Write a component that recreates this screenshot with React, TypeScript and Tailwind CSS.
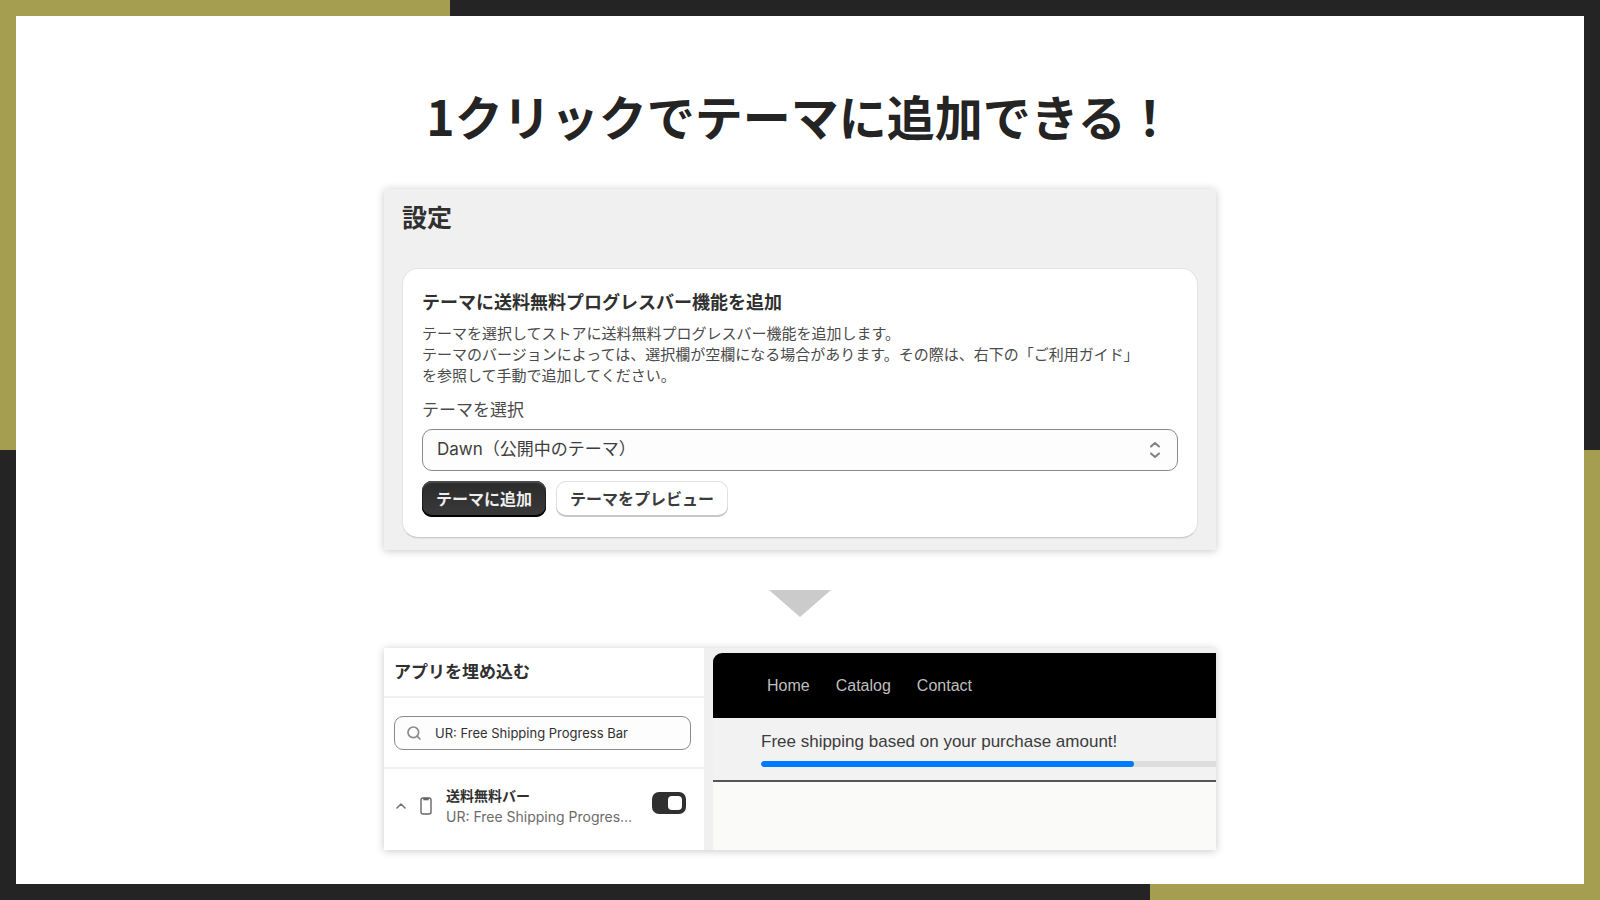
import { useState } from 'react';
import { Search } from 'lucide-react';

const NAV_LINKS = ['Home', 'Catalog', 'Contact'];
const PROGRESS = 82;

function ThemeSettings() {
  const [theme, setTheme] = useState('dawn');

  return (
    <section className="w-full bg-[#f0f0f0] px-[18px] pt-[11px] pb-3 shadow-[0_1px_8px_rgba(0,0,0,0.22)]">
      <h2 className="text-[25px] leading-8 font-bold text-[#303030]">設定</h2>

      <div className="mt-9 rounded-2xl border border-[#e3e3e3] border-b-[#cccccc] bg-white px-[19px] py-5 shadow-[0_1px_1px_rgba(0,0,0,0.06)]">
        <h3 className="text-lg leading-6 font-bold text-[#303030]">テーマに送料無料プログレスバー機能を追加</h3>
        <p className="mt-[9px] text-[15px] leading-[21px] text-[#4a4a4a]">
          テーマを選択してストアに送料無料プログレスバー機能を追加します。
          <br />
          テーマのバージョンによっては、選択欄が空欄になる場合があります。その際は、右下の「ご利用ガイド」
          <br />
          を参照して手動で追加してください。
        </p>

        <label htmlFor="theme" className="mt-3 block text-[17px] leading-6 text-[#4a4a4a]">
          テーマを選択
        </label>
        <div className="relative mt-2">
          <select
            id="theme"
            value={theme}
            onChange={(e) => setTheme(e.target.value)}
            className="block h-[42px] w-full appearance-none rounded-[10px] border border-[#8a8a8a] bg-[#fdfdfd] px-[14px] font-['Inter','Noto_Sans_CJK_JP',sans-serif] text-[17px] text-[#3c3c3c]"
          >
            <option value="dawn">Dawn（公開中のテーマ）</option>
          </select>
          <svg
            viewBox="0 0 12 18"
            className="pointer-events-none absolute top-3 right-[17px] h-[18px] w-3"
            fill="none"
            stroke="#808080"
            strokeWidth="2"
            strokeLinecap="round"
            strokeLinejoin="round"
          >
            <path d="M2 5.5 L6 2 L10 5.5" />
            <path d="M2 12.5 L6 16 L10 12.5" />
          </svg>
        </div>

        <div className="mt-[10px] flex flex-wrap gap-[10px]">
          <button
            type="button"
            className="h-9 rounded-[10px] bg-linear-to-b from-[#2b2b2b] to-[#3a3a3a] px-[14px] pb-[2px] text-base leading-6 font-bold text-[#eeeeee] shadow-[inset_0_2px_0_#4a4a4a,inset_0_-2px_0_#000,inset_0_0_0_1px_#1c1c1c]"
          >
            テーマに追加
          </button>
          <button
            type="button"
            className="h-9 rounded-[10px] bg-white px-[14px] pb-[2px] text-base leading-6 font-bold text-[#3c3c3c] shadow-[inset_0_-2px_0_#c8c8c8,inset_0_0_0_1px_#e0e0e0]"
          >
            テーマをプレビュー
          </button>
        </div>
      </div>
    </section>
  );
}

function EmbedPanel() {
  const [query, setQuery] = useState('UR: Free Shipping Progress Bar');
  const [enabled, setEnabled] = useState(true);

  return (
    <div className="flex w-[320px] shrink-0 flex-col bg-white">
      <h2 className="border-b-2 border-[#f0f0f0] px-[10px] pt-[11px] pb-[13px] text-[17px] leading-6 font-bold text-[#303030]">
        アプリを埋め込む
      </h2>

      <div className="border-b-2 border-[#f0f0f0] pt-[18px] pr-[13px] pb-[17px] pl-[10px]">
        <label className="flex h-[34px] items-center gap-[13px] rounded-[9px] border border-[#8a8a8a] bg-[#fdfdfd] px-[11px]">
          <Search size={16} strokeWidth={2.5} className="shrink-0 text-[#8a8a8a]" />
          <input
            type="text"
            aria-label="Search"
            value={query}
            onChange={(e) => setQuery(e.target.value)}
            className="w-full min-w-0 bg-transparent font-['Inter',sans-serif] text-[13px] leading-5 text-[#303030] outline-none"
          />
        </label>
      </div>

      <div className="flex items-center pt-[15px] pr-[18px] pl-3">
        <svg viewBox="0 0 10 6" className="h-[6px] w-[10px] shrink-0" fill="none" stroke="#707070" strokeWidth="1.5" strokeLinecap="round" strokeLinejoin="round">
          <path d="M1 5 L5 1 L9 5" />
        </svg>
        <svg viewBox="0 0 12 18" className="ml-[14px] h-[18px] w-3 shrink-0" fill="none" stroke="#666666" strokeWidth="1.4">
          <rect x="1" y="1" width="10" height="16" rx="2" />
          <path d="M4 1.6h4v1H4z" fill="#555555" />
        </svg>
        <div className="ml-[14px] min-w-0 flex-1">
          <p className="text-sm leading-[22px] font-bold text-[#303030]">送料無料バー</p>
          <p className="font-['Inter',sans-serif] text-sm leading-[22px] whitespace-nowrap text-[#6b6b6b]">UR: Free Shipping Progres…</p>
        </div>
        <input
          type="checkbox"
          aria-label="送料無料バー"
          checked={enabled}
          onChange={(e) => setEnabled(e.target.checked)}
          className="mt-2 flex h-[22px] w-[34px] shrink-0 appearance-none items-center self-start rounded-[7px] bg-[#8a8a8a] px-1 before:size-[14px] before:rounded-[4px] before:bg-white checked:justify-end checked:bg-[#303030]"
        />
      </div>
    </div>
  );
}

function StorePreview() {
  return (
    <div className="min-w-0 flex-1 bg-[#f0f0f0] pt-[5px] pl-[9px] font-['Liberation_Sans',Arial,sans-serif]">
      <div className="flex h-full flex-col overflow-hidden rounded-tl-[9px] bg-[#fafaf9]">
        <nav className="flex h-[65px] items-center gap-[26px] bg-black pl-[54px]">
          {NAV_LINKS.map((link) => (
            <a key={link} href="#" className="text-base leading-6 text-[#bfbfbf]">
              {link}
            </a>
          ))}
        </nav>
        <div className="border-b-2 border-[#55555a] bg-[#f2f2f2] pt-3 pb-[13px] pl-12">
          <p className="text-[17px] leading-6 text-[#3c3c3c]">Free shipping based on your purchase amount!</p>
          <div
            role="progressbar"
            aria-label="Free shipping"
            aria-valuenow={PROGRESS}
            className="mt-[7px] h-[6px] overflow-hidden rounded-l-full bg-[#dddddd]"
          >
            <div className="h-full rounded-full bg-[#007aff]" style={{ width: `${PROGRESS}%` }} />
          </div>
        </div>
      </div>
    </div>
  );
}

export default function App() {
  return (
    <div
      lang="ja"
      className="flex min-h-screen p-4 font-['Noto_Sans_CJK_JP',sans-serif] [background:linear-gradient(#a59e50,#a59e50)_left_top/450px_50%_no-repeat,linear-gradient(#a59e50,#a59e50)_right_bottom/450px_50%_no-repeat,#242424]"
    >
      <main className="flex flex-1 flex-col items-center bg-white px-6 pt-[71px] pb-[34px]">
        <h1 className="text-5xl leading-[56px] font-bold text-[#242424]">1クリックでテーマに追加できる！</h1>

        <div className="mt-[46px] flex w-full max-w-[832px] flex-col items-center">
          <ThemeSettings />

          <svg viewBox="0 0 62 27" className="mt-10 h-[27px] w-[62px]" fill="#cbcbcb">
            <path d="M0 0H62L31 27Z" />
          </svg>

          <section className="mt-[31px] flex min-h-[202px] w-full overflow-hidden shadow-[0_1px_8px_rgba(0,0,0,0.22)]">
            <EmbedPanel />
            <StorePreview />
          </section>
        </div>
      </main>
    </div>
  );
}
